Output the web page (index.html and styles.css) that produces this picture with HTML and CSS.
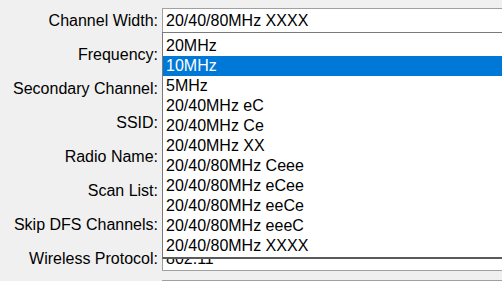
FILE: index.html
```html
<!DOCTYPE html>
<html lang="en">
<head>
  <meta charset="UTF-8" />
  <title>Wireless Settings</title>
  <link rel="stylesheet" href="styles.css">
</head>
<body>
  <form class="settings">
    <div class="row">
      <label>Channel Width:</label>
      <div class="field">20/40/80MHz XXXX</div>
    </div>
    <div class="row">
      <label>Frequency:</label>
      <div class="field"></div>
    </div>
    <div class="row">
      <label>Secondary Channel:</label>
      <div class="field"></div>
    </div>
    <div class="row">
      <label>SSID:</label>
      <div class="field"></div>
    </div>
    <div class="row">
      <label>Radio Name:</label>
      <div class="field"></div>
    </div>
    <div class="row">
      <label>Scan List:</label>
      <div class="field"></div>
    </div>
    <div class="row">
      <label>Skip DFS Channels:</label>
      <div class="field"></div>
    </div>
    <div class="row">
      <label>Wireless Protocol:</label>
      <div class="field">802.11</div>
    </div>
    <div class="row">
      <label></label>
      <div class="field disabled"></div>
    </div>

    <ul class="dropdown">
      <li>20MHz</li>
      <li class="selected">10MHz</li>
      <li>5MHz</li>
      <li>20/40MHz eC</li>
      <li>20/40MHz Ce</li>
      <li>20/40MHz XX</li>
      <li>20/40/80MHz Ceee</li>
      <li>20/40/80MHz eCee</li>
      <li>20/40/80MHz eeCe</li>
      <li>20/40/80MHz eeeC</li>
      <li>20/40/80MHz XXXX</li>
    </ul>
  </form>
</body>
</html>
```

FILE: styles.css
```css
html, body {
  margin: 0;
  padding: 0;
  overflow: hidden;
}
body {
  font-family: 'Liberation Sans', Arial, sans-serif;
  font-size: 16px;
  background-color: #f0f0f0;
  color: #000;
}
.settings {
  position: relative;
  padding-top: 8px;
  display: flex;
  flex-direction: column;
  gap: 9px;
}
.row {
  display: grid;
  grid-template-columns: 158px 400px;
  column-gap: 4px;
  align-items: center;
}
label {
  text-align: right;
  white-space: nowrap;
}
.field {
  height: 23px;
  line-height: 23px;
  padding: 0 3px;
  background: white;
  border: 1px solid #a0a0a0;
  white-space: nowrap;
}
.field.disabled {
  background: #f0f0f0;
}
.dropdown {
  position: absolute;
  left: 162px;
  top: 32px;
  width: 380px;
  margin: 0;
  padding: 3px 0 1px;
  list-style: none;
  background: white;
  border: 1px solid #7a7a7a;
  border-bottom: 2px solid #5a5a5a;
}
.dropdown li {
  height: 20px;
  line-height: 20px;
  padding-left: 3px;
  white-space: nowrap;
}
.dropdown li.selected {
  background-color: #0078d7;
  color: white;
}
```
